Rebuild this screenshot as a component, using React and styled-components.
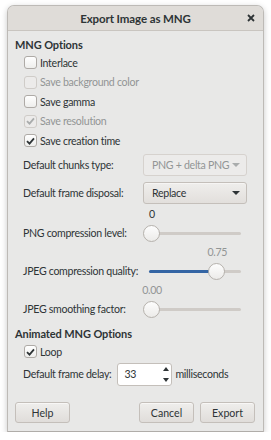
import React from 'react';
import styled, { createGlobalStyle } from 'styled-components';

const GlobalStyle = createGlobalStyle`
  html, body {
    margin: 0;
    padding: 0;
    background: #ffffff;
  }
  body {
    font-family: Lato, "Noto Sans", sans-serif;
    font-size: 10.6px;
    letter-spacing: -0.3px;
    color: #2e3436;
  }
  * { box-sizing: border-box; }
`;

const Window = styled.div`
  margin: 5px 0 0 7px;
  width: 257px;
  height: 427px;
  background: #e8e8e7;
  border: 1px solid #bdbab6;
  border-bottom-color: #b0ada9;
  border-radius: 7px 7px 0 0;
  box-shadow: 0 2px 6px rgba(0, 0, 0, 0.22);
  display: flex;
  flex-direction: column;
  overflow: hidden;
`;

const TitleBar = styled.div`
  height: 25px;
  flex: none;
  background: #dfdcd8;
  border-bottom: 1px solid #c9c5c0;
  display: grid;
  grid-template-columns: 1fr auto 1fr;
  align-items: center;
`;

const Title = styled.div`
  grid-column: 2;
  font-weight: 700;
  font-size: 11.5px;
  letter-spacing: -0.1px;
  color: #2e3436;
`;

const Close = styled.div`
  grid-column: 3;
  justify-self: end;
  margin-right: 8px;
  display: flex;
`;

const Body = styled.div`
  flex: 1;
  display: flex;
  flex-direction: column;
  padding: 0 8px 8px 7px;
  white-space: nowrap;
`;

const Section = styled.div`
  height: 16px;
  line-height: 16px;
  margin-top: ${p => p.$top || 0}px;
  font-weight: 700;
  font-size: 11px;
  letter-spacing: -0.1px;
`;

const CheckRow = styled.label`
  height: 19.5px;
  display: flex;
  align-items: center;
  gap: 3px;
  padding-left: 9px;
  color: ${p => (p.$disabled ? '#929595' : '#2e3436')};
`;

const Box = styled.span`
  width: 13px;
  height: 13px;
  border-radius: 3px;
  border: 1px solid ${p => (p.$disabled ? '#cfccc8' : '#aeaaa6')};
  background: ${p => (p.$disabled ? '#ecebea' : 'linear-gradient(#ffffff, #eeeeec)')};
  display: flex;
  align-items: center;
  justify-content: center;
`;

const FieldRow = styled.div`
  height: ${p => p.$h || 22}px;
  margin-top: ${p => p.$top || 0}px;
  display: grid;
  grid-template-columns: 120px 104px;
  padding-left: 8px;
  align-items: center;
`;

const Combo = styled.div`
  height: 22px;
  border: 1px solid ${p => (p.$disabled ? '#d6d2ce' : '#c4bfba')};
  border-radius: 3px;
  background: ${p => (p.$disabled ? '#ecebea' : 'linear-gradient(#efeeec, #e2dfdc)')};
  color: ${p => (p.$disabled ? '#929595' : '#2e3436')};
  display: flex;
  align-items: center;
  justify-content: space-between;
  padding: 0 6px 0 8px;
  box-shadow: ${p => (p.$disabled ? 'none' : 'inset 0 1px #f6f5f4')};
`;

const SliderBlock = styled.div`
  display: flex;
  flex-direction: column;
  margin-top: ${p => p.$top || 0}px;
`;

const ValueLine = styled.div`
  height: 16px;
  margin-left: 128px;
  width: 104px;
  position: relative;
`;

const Value = styled.span`
  position: absolute;
  top: 0;
  line-height: 16px;
  transform: translateX(-50%);
  color: ${p => (p.$dim ? '#929595' : '#2e3436')};
`;

const Track = styled.div`
  position: relative;
  height: 22px;
  width: 104px;
`;

const Rail = styled.div`
  position: absolute;
  left: 6px;
  right: 6px;
  top: 10px;
  height: 3px;
  border-radius: 2px;
  background: #cfcbc7;
`;

const Fill = styled.div`
  position: absolute;
  left: 6px;
  top: 10px;
  height: 3px;
  border-radius: 2px;
  background: #3465a4;
`;

const Knob = styled.div`
  position: absolute;
  top: 3px;
  width: 17px;
  height: 17px;
  border-radius: 50%;
  border: 1px solid #b6b2ad;
  background: linear-gradient(#fdfdfd, #ecebe9);
`;

const DelayRow = styled.div`
  display: flex;
  align-items: center;
  height: 23px;
  margin-top: 1px;
  padding-left: 8px;
`;

const Spin = styled.div`
  margin-left: 6px;
  width: 55px;
  height: 23px;
  background: #ffffff;
  border: 1px solid #c4bfba;
  border-radius: 3px;
  display: flex;
  align-items: center;
  justify-content: space-between;
  padding: 0 2px 0 6px;
`;

const Arrows = styled.div`
  display: flex;
  flex-direction: column;
  justify-content: space-between;
  height: 15px;
`;

const Unit = styled.span`
  margin-left: 3px;
`;

const Buttons = styled.div`
  margin-top: auto;
  display: flex;
  gap: 6px;
  padding-left: 0;
`;

const Button = styled.button`
  width: 55px;
  height: 21px;
  font: inherit;
  color: #2e3436;
  border: 1px solid #c4bfba;
  border-radius: 3px;
  background: linear-gradient(#efeeec, #e0ddda);
  box-shadow: inset 0 1px #f8f7f6;
  padding: 0;
  margin-left: ${p => (p.$push ? 'auto' : '0')};
`;

const Check = ({ color }) => (
  <svg width="9" height="8" viewBox="0 0 9 8">
    <path d="M1 4.2 L3.5 6.6 L8 1.4" fill="none" stroke={color} strokeWidth="1.8" />
  </svg>
);

const Caret = ({ color }) => (
  <svg width="8" height="4" viewBox="0 0 8 4">
    <path d="M0 0 H8 L4 4 Z" fill={color} />
  </svg>
);

const CheckItem = ({ label, checked, disabled }) => (
  <CheckRow $disabled={disabled}>
    <Box $disabled={disabled}>{checked && <Check color={disabled ? '#a9acac' : '#2e3436'} />}</Box>
    {label}
  </CheckRow>
);

const Slider = ({ label, value, text, dim, top }) => {
  const pos = 1 + value * 87;
  return (
    <SliderBlock $top={top}>
      <ValueLine>
        <Value $dim={dim} style={{ left: pos + 8 }}>{text}</Value>
      </ValueLine>
      <FieldRow>
        <span>{label}</span>
        <Track>
          <Rail />
          {value > 0 && <Fill style={{ width: pos + 2 }} />}
          <Knob style={{ left: pos - 1 }} />
        </Track>
      </FieldRow>
    </SliderBlock>
  );
};

export default function App() {
  return (
    <>
      <GlobalStyle />
      <Window>
        <TitleBar>
          <Title>Export Image as MNG</Title>
          <Close>
            <svg width="8" height="8" viewBox="0 0 8 8">
              <path d="M1 1 L7 7 M7 1 L1 7" stroke="#2e3436" strokeWidth="1.8" />
            </svg>
          </Close>
        </TitleBar>
        <Body>
          <Section $top={6}>MNG Options</Section>
          <CheckItem label="Interlace" />
          <CheckItem label="Save background color" disabled />
          <CheckItem label="Save gamma" />
          <CheckItem label="Save resolution" checked disabled />
          <CheckItem label="Save creation time" checked />

          <FieldRow $top={3.5}>
            <span>Default chunks type:</span>
            <Combo $disabled>
              PNG + delta PNG
              <Caret color="#a9acac" />
            </Combo>
          </FieldRow>
          <FieldRow $top={6}>
            <span>Default frame disposal:</span>
            <Combo>
              Replace
              <Caret color="#2e3436" />
            </Combo>
          </FieldRow>

          <Slider top={2} label="PNG compression level:" value={0} text="0" />
          <Slider label="JPEG compression quality:" value={0.75} text="0.75" dim />
          <Slider label="JPEG smoothing factor:" value={0} text="0.00" dim />

          <Section $top={6}>Animated MNG Options</Section>
          <CheckItem label="Loop" checked />
          <DelayRow>
            <span>Default frame delay:</span>
            <Spin>
              33
              <Arrows>
                <svg width="6" height="4" viewBox="0 0 6 4"><path d="M0 4 H6 L3 0 Z" fill="#2e3436" /></svg>
                <svg width="6" height="4" viewBox="0 0 6 4"><path d="M0 0 H6 L3 4 Z" fill="#2e3436" /></svg>
              </Arrows>
            </Spin>
            <Unit>milliseconds</Unit>
          </DelayRow>

          <Buttons>
            <Button>Help</Button>
            <Button $push>Cancel</Button>
            <Button>Export</Button>
          </Buttons>
        </Body>
      </Window>
    </>
  );
}
